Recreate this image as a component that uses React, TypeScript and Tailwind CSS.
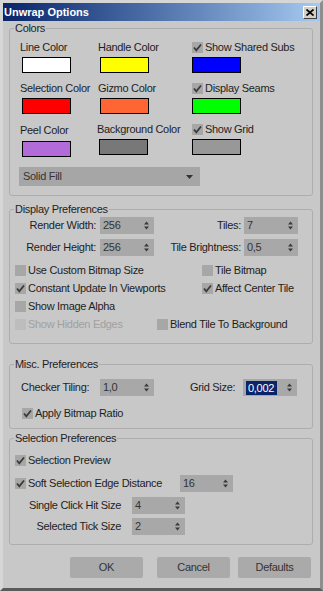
import React from 'react'

const Check = () => (
  <svg width="11" height="11" viewBox="0 0 11 11">
    <path d="M2 5.5 L4.3 8.3 L9 2.5" stroke="#3a3a3a" strokeWidth="1.8" fill="none" />
  </svg>
)

const CheckBox = ({
  label,
  checked,
  disabled,
}: {
  label: string
  checked?: boolean
  disabled?: boolean
}) => (
  <div className="flex items-center h-[18px] gap-[2px] whitespace-nowrap">
    <span
      className={
        disabled
          ? 'w-[11px] h-[11px] bg-[#bdbdbd] flex items-center justify-center'
          : 'w-[11px] h-[11px] bg-[#a7a7a7] flex items-center justify-center'
      }
    >
      {checked && <Check />}
    </span>
    <span className={disabled ? 'text-[#a0a0a0]' : ''}>{label}</span>
  </div>
)

const Arrows = () => (
  <svg width="5" height="9" viewBox="0 0 5 9">
    <path d="M2.5 0.5 L5 3.5 L0 3.5 Z" fill="#3a3a3a" />
    <path d="M0 5.5 L5 5.5 L2.5 8.5 Z" fill="#3a3a3a" />
  </svg>
)

const Spinner = ({
  value,
  w,
  selected,
}: {
  value: string
  w: string
  selected?: boolean
}) => (
  <div
    className={`${w} h-[17px] bg-[#a8a8a8] flex items-center justify-between pl-[3px] pr-[5px] text-[#333]`}
  >
    {selected ? (
      <span className="bg-[#0a246a] text-white pl-[2px] pr-[3px] leading-[14px]">
        {value}
      </span>
    ) : (
      <span>{value}</span>
    )}
    <Arrows />
  </div>
)

const Swatch = ({ color, className = '' }: { color: string; className?: string }) => (
  <div
    className={`w-[49px] h-[16px] border border-black mt-[3px] ${className}`}
    style={{ backgroundColor: color }}
  />
)

const Group = ({
  title,
  className = '',
  children,
}: {
  title: string
  className?: string
  children: React.ReactNode
}) => (
  <fieldset
    className={`ml-[6px] w-[304px] border border-[#adadad] rounded-[3px] ${className}`}
  >
    <legend className="ml-[4px] px-[1px] leading-[14px]">{title}</legend>
    {children}
  </fieldset>
)

export default function App() {
  return (
    <div className="w-[323px] h-[591px] bg-[#c8c8c8] border-[3px] border-t-[#d6d6d6] border-l-[#d6d6d6] border-r-[#8e8e8e] border-b-[#5a5a5a] font-['Liberation_Sans',Arial,sans-serif] text-[11px] tracking-[-0.3px] text-[#1e1e1e] leading-[13px] flex flex-col">
      {/* title bar */}
      <div className="h-[18px] shrink-0 bg-gradient-to-r from-[#0a246a] to-[#a6caf0] flex items-center justify-between pl-[1px] pr-[3px]">
        <span className="text-white font-bold tracking-normal">Unwrap Options</span>
        <div className="w-[14px] h-[13px] bg-[#d4d0c8] border border-t-white border-l-white border-r-[#404040] border-b-[#404040] flex items-center justify-center">
          <svg width="8" height="7" viewBox="0 0 8 7">
            <path d="M0.5 0.5 L7.5 6.5 M7.5 0.5 L0.5 6.5" stroke="#000" strokeWidth="1.7" />
          </svg>
        </div>
      </div>

      <Group title="Colors">
        <div className="pt-[6px] pl-[10px] pb-[9px]">
          <div className="grid grid-cols-[78px_94px_1fr] gap-y-[9px]">
            <div>
              <div>Line Color</div>
              <Swatch color="#ffffff" className="ml-[2px]" />
            </div>
            <div>
              <div>Handle Color</div>
              <Swatch color="#ffff00" className="ml-[2px]" />
            </div>
            <div>
              <div className="-mt-[3px] -mb-[2px]">
                <CheckBox label="Show Shared Subs" checked />
              </div>
              <Swatch color="#0000ff" />
            </div>
            <div>
              <div>Selection Color</div>
              <Swatch color="#ff0000" className="ml-[2px]" />
            </div>
            <div>
              <div>Gizmo Color</div>
              <Swatch color="#ff6633" className="ml-[2px]" />
            </div>
            <div>
              <div className="-mt-[3px] -mb-[2px]">
                <CheckBox label="Display Seams" checked />
              </div>
              <Swatch color="#00ff00" />
            </div>
            <div className="mt-[1px]">
              <div>Peel Color</div>
              <Swatch color="#b36bd9" className="ml-[2px] mt-[4px]" />
            </div>
            <div>
              <div className="-ml-[1px]">Background Color</div>
              <Swatch color="#787878" className="ml-[1px]" />
            </div>
            <div>
              <div className="-mt-[3px] -mb-[2px]">
                <CheckBox label="Show Grid" checked />
              </div>
              <Swatch color="#989898" />
            </div>
          </div>
          <div className="mt-[10px] -ml-[1px] w-[181px] h-[19px] bg-[#a6a6a6] flex items-center justify-between pl-[4px] pr-[7px] text-[#333]">
            <span>Solid Fill</span>
            <svg width="7" height="4" viewBox="0 0 7 4">
              <path d="M0 0 L7 0 L3.5 4 Z" fill="#333" />
            </svg>
          </div>
        </div>
      </Group>

      <Group title="Display Preferences" className="mt-[6px]">
        <div className="pt-[1px] pb-[10px]">
          <div className="flex items-center">
            <div className="w-[86px] text-right">Render Width:</div>
            <Spinner value="256" w="ml-[4px] w-[54px]" />
            <div className="w-[87px] text-right">Tiles:</div>
            <Spinner value="7" w="ml-[3px] w-[54px]" />
          </div>
          <div className="flex items-center mt-[5px]">
            <div className="w-[86px] text-right">Render Height:</div>
            <Spinner value="256" w="ml-[4px] w-[54px]" />
            <div className="w-[87px] text-right">Tile Brightness:</div>
            <Spinner value="0,5" w="ml-[3px] w-[54px]" />
          </div>
          <div className="mt-[5px] pl-[5px]">
            <div className="flex">
              <div className="w-[187px]">
                <CheckBox label="Use Custom Bitmap Size" />
              </div>
              <CheckBox label="Tile Bitmap" />
            </div>
            <div className="flex">
              <div className="w-[187px]">
                <CheckBox label="Constant Update In Viewports" checked />
              </div>
              <CheckBox label="Affect Center Tile" checked />
            </div>
            <CheckBox label="Show Image Alpha" />
            <div className="flex">
              <div className="w-[142px]">
                <CheckBox label="Show Hidden Edges" disabled />
              </div>
              <CheckBox label="Blend Tile To Background" />
            </div>
          </div>
        </div>
      </Group>

      <Group title="Misc. Preferences" className="mt-[13px]">
        <div className="pt-[8px] pb-[6px] pl-[11px]">
          <div className="flex items-center">
            <div className="w-[79px]">Checker Tiling:</div>
            <Spinner value="1,0" w="w-[54px]" />
            <div className="ml-[36px] w-[53px]">Grid Size:</div>
            <Spinner value="0,002" w="w-[54px]" selected />
          </div>
          <div className="mt-[8px] pl-[1px]">
            <CheckBox label="Apply Bitmap Ratio" checked />
          </div>
        </div>
      </Group>

      <Group title="Selection Preferences" className="mt-[2px]">
        <div className="pt-[6px] pb-[9px]">
          <div className="pl-[5px]">
            <CheckBox label="Selection Preview" checked />
            <div className="flex items-center mt-[5px]">
              <div className="w-[165px]">
                <CheckBox label="Soft Selection Edge Distance" checked />
              </div>
              <Spinner value="16" w="w-[53px]" />
            </div>
          </div>
          <div className="flex items-center mt-[5px]">
            <div className="w-[111px] text-right">Single Click Hit Size</div>
            <Spinner value="4" w="ml-[11px] w-[53px]" />
          </div>
          <div className="flex items-center mt-[4px]">
            <div className="w-[111px] text-right">Selected Tick Size</div>
            <Spinner value="2" w="ml-[11px] w-[53px]" />
          </div>
        </div>
      </Group>

      <div className="flex mt-[12px] ml-[67px] text-[#333]">
        <button className="w-[73px] h-[21px] bg-[#aaaaaa] rounded-[2px]">OK</button>
        <button className="ml-[14px] w-[73px] h-[21px] bg-[#aaaaaa] rounded-[2px]">Cancel</button>
        <button className="ml-[8px] w-[73px] h-[21px] bg-[#aaaaaa] rounded-[2px]">Defaults</button>
      </div>
    </div>
  )
}
